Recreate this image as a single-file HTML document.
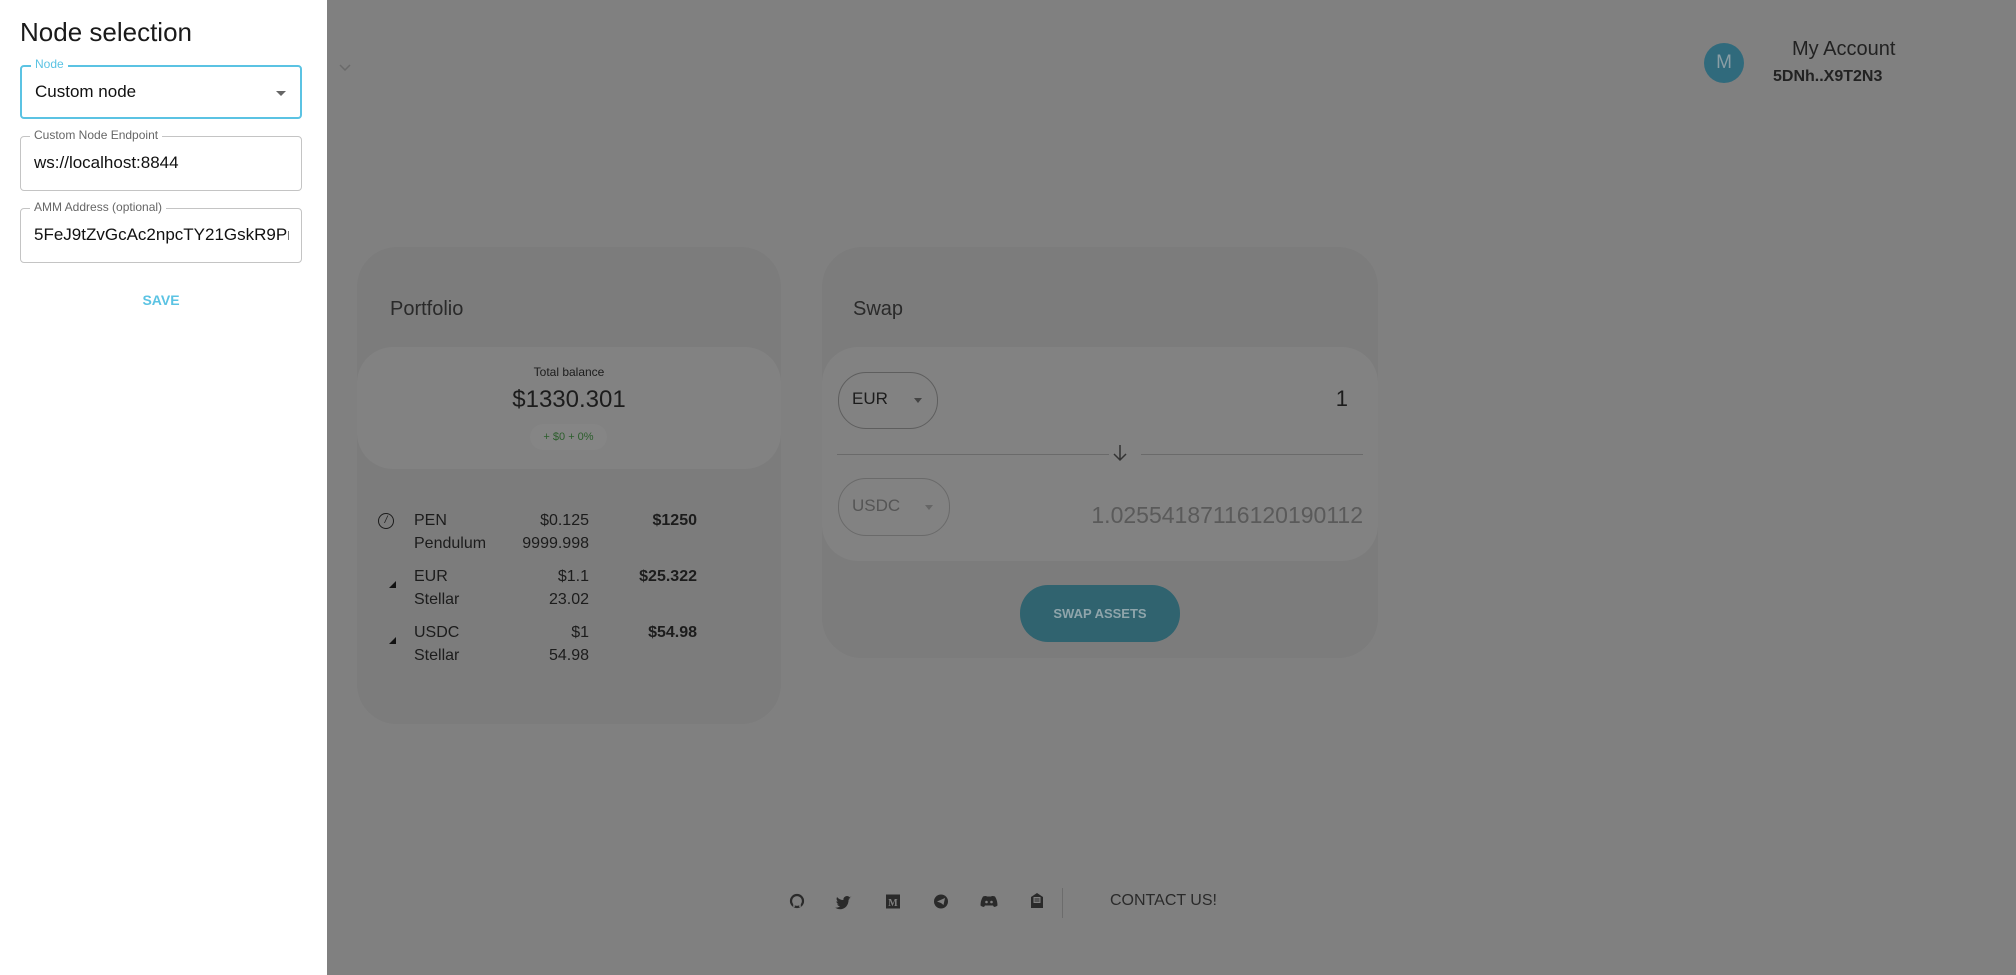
<!DOCTYPE html>
<html><head><meta charset="utf-8"><style>
*{box-sizing:border-box;margin:0;padding:0}
body{width:2016px;height:975px;background:#808080;font-family:"Liberation Sans",sans-serif;position:relative;overflow:hidden;color:#1c1c1c}
.a{position:absolute}
.card{position:absolute;background:#7c7c7c;border-radius:40px}
.inner{position:absolute;background:#828282;border-radius:36px}
.drawer{position:absolute;left:0;top:0;width:327px;height:975px;background:#fff}
.f{position:absolute;left:20px;width:282px;border:1px solid #c4c4c4;border-radius:4px}
.f .l{position:absolute;left:9px;top:-9px;background:#fff;padding:0 4px;font-size:12px;color:#666}
.f .v{position:absolute;left:13px;top:16px;font-size:17px;color:#111;white-space:nowrap;overflow:hidden;width:255px}
.r{position:absolute;font-size:16px;color:#1c1c1c}
</style></head><body>
<svg class="a" style="left:339px;top:64px" width="12" height="8" viewBox="0 0 12 8"><path d="M1 1 L6 6 L11 1" fill="none" stroke="#6a6a6a" stroke-width="1.5"/></svg>
<div class="a" style="left:1704px;top:43px;width:40px;height:40px;border-radius:50%;background:#306a7c;color:#8a9ea5;font-size:19px;text-align:center;line-height:40px">M</div>
<div class="a" style="left:1792px;top:38px;font-size:20px;color:#222">My Account</div>
<div class="a" style="left:1773px;top:68px;font-size:16px;font-weight:bold;color:#222">5DNh..X9T2N3</div>

<div class="card" style="left:357px;top:247px;width:424px;height:477px"></div>
<div class="a" style="left:390px;top:298px;font-size:20px;color:#2a2a2a">Portfolio</div>
<div class="inner" style="left:357px;top:347px;width:424px;height:122px"></div>
<div class="a" style="left:357px;top:365px;width:424px;text-align:center;font-size:12px">Total balance</div>
<div class="a" style="left:357px;top:386px;width:424px;text-align:center;font-size:24px">$1330.301</div>
<div class="a" style="left:530px;top:424px;width:77px;height:26px;border-radius:13px;background:#858585;text-align:center;line-height:26px;font-size:11px;color:#2c5e2c">+ $0 + 0%</div>
<div class="a" style="left:378px;top:513px;width:16px;height:16px;border:1.5px solid #1c1c1c;border-radius:50%;font-size:10px;text-align:center;line-height:13px;font-style:italic">/</div>
<div class="a" style="left:389px;top:581px;width:0;height:0;border-left:7px solid transparent;border-bottom:7px solid #111"></div>
<div class="a" style="left:389px;top:637px;width:0;height:0;border-left:7px solid transparent;border-bottom:7px solid #111"></div>
<div class="r" style="left:414px;top:512px">PEN</div><div class="r" style="left:414px;top:535px">Pendulum</div>
<div class="r" style="left:414px;top:568px">EUR</div><div class="r" style="left:414px;top:591px">Stellar</div>
<div class="r" style="left:414px;top:624px">USDC</div><div class="r" style="left:414px;top:647px">Stellar</div>
<div class="r" style="right:1427px;top:512px">$0.125</div><div class="r" style="right:1427px;top:535px">9999.998</div>
<div class="r" style="right:1427px;top:568px">$1.1</div><div class="r" style="right:1427px;top:591px">23.02</div>
<div class="r" style="right:1427px;top:624px">$1</div><div class="r" style="right:1427px;top:647px">54.98</div>
<div class="r" style="right:1319px;top:512px;font-weight:bold">$1250</div>
<div class="r" style="right:1319px;top:568px;font-weight:bold">$25.322</div>
<div class="r" style="right:1319px;top:624px;font-weight:bold">$54.98</div>

<div class="card" style="left:822px;top:247px;width:556px;height:411px"></div>
<div class="a" style="left:853px;top:298px;font-size:20px;color:#2a2a2a">Swap</div>
<div class="inner" style="left:822px;top:347px;width:556px;height:214px"></div>
<div class="a" style="left:838px;top:372px;width:100px;height:57px;border:1px solid #5e5e5e;border-radius:28px"></div>
<div class="a" style="left:852px;top:389px;font-size:17px">EUR</div>
<div class="a" style="left:914px;top:398px;border-left:4px solid transparent;border-right:4px solid transparent;border-top:5px solid #444"></div>
<div class="a" style="right:668px;top:386px;font-size:22px">1</div>
<div class="a" style="left:837px;top:454px;width:272px;height:1px;background:#6a6a6a"></div>
<div class="a" style="left:1141px;top:454px;width:222px;height:1px;background:#6a6a6a"></div>
<svg class="a" style="left:1113px;top:444px" width="14" height="18" viewBox="0 0 14 18"><path d="M7 1 V16 M1 10 L7 16 L13 10" fill="none" stroke="#333" stroke-width="1.5"/></svg>
<div class="a" style="left:838px;top:478px;width:112px;height:58px;border:1px solid #6a6a6a;border-radius:28px"></div>
<div class="a" style="left:852px;top:496px;font-size:17px;color:#555">USDC</div>
<div class="a" style="left:925px;top:505px;border-left:4px solid transparent;border-right:4px solid transparent;border-top:5px solid #666"></div>
<div class="a" style="right:653px;top:502px;font-size:23px;color:#5a5a5a">1.02554187116120190112</div>
<div class="a" style="left:1020px;top:585px;width:160px;height:57px;border-radius:28px;background:#30636f;color:#8fa5ab;font-size:13px;font-weight:bold;text-align:center;line-height:57px">SWAP ASSETS</div>

<svg class="a" style="left:788px;top:892px" width="260" height="20" viewBox="0 0 260 20" fill="#2a2a2a">
<circle cx="9" cy="9" r="6" fill="none" stroke="#2a2a2a" stroke-width="2.2"/>
<path d="M6 15 v-3 M12 15 v-3" stroke="#808080" stroke-width="1.5"/>
<path d="M64 4 q-1 1 -2.5 1 q-2.5 -2 -5 0 q-1.5 1.5 -1 3 q-4 0 -6.5 -3 q-1.2 3 1 4.5 l-1.5 -.3 q0 2.3 2.3 3 l-1.7 .2 q1 1.8 3 2 q-2 1.5 -5 1.3 q6 3.5 11 -1 q2.5 -3 2.5 -7 l1.7 -1.5 l-1.8 .4z"/>
<rect x="98" y="2.5" width="14" height="14"/>
<text x="105" y="14" font-size="10" font-weight="bold" fill="#808080" text-anchor="middle" font-family="Liberation Serif">M</text>
<circle cx="153" cy="9.5" r="7"/>
<path d="M149 9.5 L157 6 L155.5 13 L153 11 Z" fill="#808080"/>
<path d="M195 4.5 q3 -1 4 0 h4 q1 -1 4 0 q2.5 4 2.5 9 q-1.5 1.5 -3.5 1.5 l-1 -1.5 h-8 l-1 1.5 q-2 0 -3.5 -1.5 q0 -5 2.5 -9z"/>
<circle cx="198.5" cy="10" r="1.3" fill="#808080"/><circle cx="203.5" cy="10" r="1.3" fill="#808080"/>
<path d="M243 5 l6 -4 l6 4 v11 h-12z"/>
<rect x="245.5" y="5" width="7" height="6" fill="#808080"/>
<path d="M246.5 7 h5 M246.5 9 h5" stroke="#2a2a2a" stroke-width="1"/>
</svg>
<div class="a" style="left:1062px;top:888px;width:1px;height:30px;background:#6c6c6c"></div>
<div class="a" style="left:1110px;top:892px;font-size:16px;color:#2a2a2a">CONTACT US!</div>

<div class="drawer">
<div class="a" style="left:20px;top:17px;font-size:26px;color:#1a1a1a">Node selection</div>
<div class="f" style="top:65px;height:54px;border:2px solid #5bc3e3"><span class="l" style="color:#5bc3e3;top:-10px">Node</span><span class="v" style="top:15px">Custom node</span>
<span class="a" style="right:14px;top:24px;border-left:5px solid transparent;border-right:5px solid transparent;border-top:5px solid #666"></span></div>
<div class="f" style="top:136px;height:55px"><span class="l">Custom Node Endpoint</span><span class="v">ws://localhost:8844</span></div>
<div class="f" style="top:208px;height:55px"><span class="l">AMM Address (optional)</span><span class="v">5FeJ9tZvGcAc2npcTY21GskR9PnGk</span></div>
<div class="a" style="left:0;width:322px;top:292px;text-align:center;font-size:14px;font-weight:bold;color:#5bc3e3">SAVE</div>
</div>
</body></html>
